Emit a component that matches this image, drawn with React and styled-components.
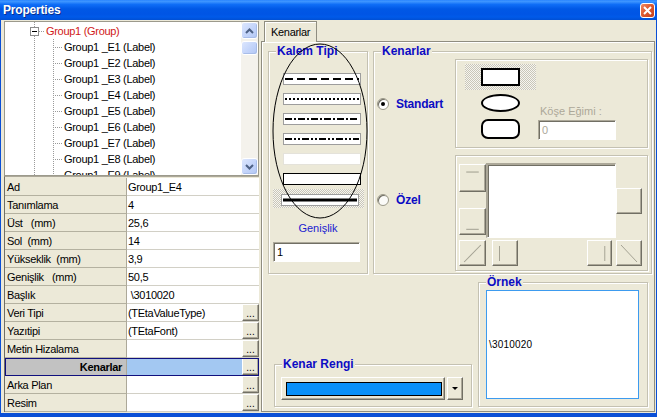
import React from "react";
import styled, { createGlobalStyle, css } from "styled-components";

const GlobalStyle = createGlobalStyle`
  html, body {
    margin: 0;
    padding: 0;
    background: #ece9d8;
  }
  body {
    font-family: "Liberation Sans", Arial, sans-serif;
    font-size: 11px;
    color: #000;
  }
  * {
    box-sizing: border-box;
  }
`;

// classic 3d borders
const raised = css`
  border: 1px solid;
  border-color: #fff #716f64 #716f64 #fff;
  box-shadow: inset -1px -1px 0 #aca899;
  background: #ece9d8;
`;
const sunken = css`
  border: 1px solid;
  border-color: #aca899 #fff #fff #aca899;
  box-shadow: inset 1px 1px 0 #716f64;
`;
const etched = css`
  border: 1px solid #c4c1b2;
  box-shadow: inset 1px 1px 0 #fff, 1px 1px 0 #fff;
`;
const dither = css`
  background: repeating-conic-gradient(#c9c6b8 0 25%, #f6f5f0 0 50%) 0 0 / 2px 2px;
`;

const Window = styled.div`
  width: 657px;
  height: 417px;
  display: flex;
  flex-direction: column;
  overflow: hidden;
`;

const TitleBar = styled.div`
  height: 20px;
  flex: none;
  display: flex;
  align-items: center;
  justify-content: space-between;
  padding: 0 2px 0 3px;
  background: linear-gradient(
    to bottom,
    #2b86ff 0%,
    #3d95ff 8%,
    #0f6ef7 22%,
    #0058e6 45%,
    #0055e5 70%,
    #005ae9 85%,
    #004fd4 100%
  );
`;

const Title = styled.span`
  color: #fff;
  font-weight: bold;
  font-size: 12px;
  letter-spacing: -0.2px;
  text-shadow: 1px 1px 0 #0a2f8f;
`;

const CloseButton = styled.div`
  width: 15px;
  height: 15px;
  border: 1px solid #fff;
  border-radius: 3px;
  background: linear-gradient(135deg, #f08a62 0%, #de5a31 45%, #c4401b 100%);
  display: flex;
  align-items: center;
  justify-content: center;
`;

const Frame = styled.div`
  flex: 1;
  display: flex;
  gap: 2px;
  background: #ece9d8;
  border: solid #0a4fd6;
  border-width: 0 1px 4px 1px;
  padding: 1px 1px 1px 3px;
  min-height: 0;
`;

const LeftPane = styled.div`
  width: 255px;
  flex: none;
  display: flex;
  flex-direction: column;
`;

/* ---------- tree ---------- */

const Tree = styled.div`
  height: 155px;
  flex: none;
  display: flex;
  border: 1px solid #9c9a8c;
  background: #fff;
`;

const TreeBody = styled.div`
  flex: 1;
  overflow: hidden;
  padding-top: 1px;
  background:
    repeating-linear-gradient(to bottom, #9a9a9a 0 1px, transparent 1px 2px) 29px 0 / 1px 100% no-repeat,
    repeating-linear-gradient(to bottom, #9a9a9a 0 1px, transparent 1px 2px) 48px 17px / 1px calc(100% - 17px) no-repeat,
    #fff;
`;

const TreeRow = styled.div`
  height: 16px;
  display: flex;
  align-items: center;
  padding-left: ${(p) => (p.$root ? 25 : 48)}px;
  white-space: pre;
  font-size: 11px;
  letter-spacing: -0.3px;
  color: ${(p) => (p.$root ? "#d01818" : "#000")};
`;

const Expander = styled.span`
  width: 9px;
  height: 9px;
  border: 1px solid #8c8c8c;
  background: #fff;
  display: flex;
  align-items: center;
  justify-content: center;
  &::after {
    content: "";
    width: 5px;
    height: 1px;
    background: #000;
  }
`;

const Connector = styled.span`
  width: ${(p) => p.$w}px;
  height: 1px;
  margin-right: ${(p) => p.$gap}px;
  background: repeating-linear-gradient(to right, #9a9a9a 0 1px, transparent 1px 2px);
`;

const ScrollBar = styled.div`
  width: 17px;
  flex: none;
  display: flex;
  flex-direction: column;
  background: #f4f2ec;
`;

const ScrollButton = styled.div`
  height: 17px;
  flex: none;
  border: 1px solid #fff;
  border-radius: 3px;
  background: linear-gradient(135deg, #dce6fd 0%, #c3d4fa 55%, #b3c7f4 100%);
  box-shadow: inset -1px -1px 0 #a8bde9;
  display: flex;
  align-items: center;
  justify-content: center;
`;

const Thumb = styled(ScrollButton)`
  height: 14px;
  margin-top: 2px;
`;

const Track = styled.div`
  flex: 1;
`;

/* ---------- property grid ---------- */

const PropGrid = styled.div`
  flex: 1;
  display: flex;
  flex-direction: column;
  border-top: 1px solid #aca899;
  border-left: 1px solid #716f64;
  padding-top: 1px;
`;

const PropRow = styled.div`
  height: 18px;
  flex: none;
  display: grid;
  grid-template-columns: 122px 1fr;
  ${(p) =>
    p.$selected &&
    css`
      outline: 1px solid #10107e;
      outline-offset: -1px;
    `}
`;

const PropName = styled.div`
  display: flex;
  align-items: center;
  padding: 0 4px 0 2px;
  white-space: pre;
  letter-spacing: -0.3px;
  background: ${(p) => (p.$selected ? "#c2c2c2" : "#ece9d8")};
  border-right: 1px solid #aca899;
  border-bottom: 1px solid #b4b1a0;
  justify-content: ${(p) => (p.$selected ? "flex-end" : "flex-start")};
  font-weight: ${(p) => (p.$selected ? "bold" : "normal")};
`;

const PropValue = styled.div`
  display: flex;
  align-items: center;
  justify-content: space-between;
  padding-left: 1px;
  white-space: pre;
  letter-spacing: -0.3px;
  background: ${(p) => (p.$selected ? "#a3c8f2" : "#fff")};
  border-bottom: 1px solid #d2d0c6;
`;

const DotsButton = styled.div`
  ${raised}
  width: 17px;
  height: 17px;
  align-self: flex-start;
  display: flex;
  align-items: flex-end;
  justify-content: center;
  font-size: 10px;
  line-height: 12px;
  letter-spacing: 0;
`;

/* ---------- right side ---------- */

const RightPane = styled.div`
  width: 394px;
  flex: none;
  display: flex;
  flex-direction: column;
`;

const TabStrip = styled.div`
  height: 20px;
  flex: none;
  display: flex;
  align-items: flex-end;
  padding-left: 3px;
`;

const Tab = styled.div`
  position: relative;
  z-index: 1;
  height: 21px;
  margin-bottom: -1px;
  padding: 2px 6px 0;
  background: #ece9d8;
  border: 1px solid #8f8d80;
  border-bottom: none;
  box-shadow: inset 1px 1px 0 #fff;
  font-size: 11px;
  letter-spacing: -0.3px;
  line-height: 16px;
`;

const TabPage = styled.div`
  flex: 1;
  display: flex;
  flex-direction: column;
  border: 1px solid #8f8d80;
  box-shadow: inset 1px 1px 0 #fff;
  padding-top: 9px;
`;

const TopRow = styled.div`
  display: flex;
  gap: 5px;
  padding-left: 6px;
`;

const BottomRow = styled.div`
  display: flex;
  align-items: flex-end;
  gap: 6px;
  margin-top: 8px;
  padding-left: 12px;
`;

const Group = styled.div`
  position: relative;
  flex: none;
  width: ${(p) => p.$w}px;
  height: ${(p) => p.$h}px;
  ${etched}
`;

const Legend = styled.span`
  position: absolute;
  left: 7px;
  top: -8px;
  padding: 0 1px;
  background: #ece9d8;
  color: #0c0cc4;
  font-weight: bold;
  font-size: 12px;
  line-height: 14px;
  white-space: nowrap;
`;

/* Kalem Tipi */

const KalemBody = styled.div`
  display: flex;
  flex-direction: column;
  padding: 21px 0 0 4px;
`;

const PenList = styled.div`
  display: flex;
  flex-direction: column;
  gap: 8px;
  margin-left: 10px;
`;

const PenBox = styled.div`
  width: 78px;
  height: 12px;
  background: #fff;
  border: 1px solid ${(p) => p.$border || "#9d9d9d"};
  display: flex;
`;

const PenHatch = styled.div`
  ${dither}
  width: 91px;
  height: 19px;
  margin-top: 4px;
  padding: 5px 0 0 8px;
`;

const BlueLabel = styled.div`
  color: #1a1ad0;
  font-size: 11px;
  line-height: 13px;
  text-align: ${(p) => p.$align || "left"};
  margin-top: ${(p) => p.$mt || 0}px;
  padding-right: ${(p) => p.$pr || 0}px;
`;

const TextInput = styled.div`
  ${sunken}
  width: ${(p) => p.$w}px;
  height: ${(p) => p.$h || 20}px;
  margin-top: ${(p) => p.$mt || 0}px;
  background: #fff;
  padding: 2px 0 0 3px;
  font-size: 11px;
  line-height: 14px;
  color: ${(p) => (p.$disabled ? "#aca899" : "#000")};
`;

const Annotation = styled.svg`
  position: absolute;
  left: 3px;
  top: -9px;
  pointer-events: none;
  overflow: visible;
`;

/* Kenarlar */

const KenarGrid = styled.div`
  display: grid;
  grid-template-columns: 81px 193px;
  grid-template-rows: 89px 116px;
  row-gap: 7px;
  padding-top: 7px;
`;

const RadioItem = styled.div`
  display: flex;
  align-items: center;
  gap: 7px;
  padding-left: 3px;
  align-self: ${(p) => (p.$top ? "start" : "center")};
  margin-top: ${(p) => (p.$top ? 38 : 0)}px;
  color: #0c0cc4;
  font-weight: bold;
  font-size: 12px;
  letter-spacing: -0.2px;
`;

const RadioDot = styled.span`
  width: 12px;
  height: 12px;
  border-radius: 50%;
  border: 1px solid #9a9888;
  background: ${(p) => (p.$faded ? "#fbfbf8" : "#fff")};
  box-shadow: inset 1px 1px 0 #6f6d62;
  display: flex;
  align-items: center;
  justify-content: center;
  &::after {
    content: "";
    width: 4px;
    height: 4px;
    border-radius: 50%;
    background: ${(p) => (p.$checked ? "#000" : "transparent")};
  }
`;

const Panel = styled.div`
  ${etched}
  display: flex;
`;

const ShapePanel = styled(Panel)`
  padding: 4px 0 0 9px;
`;

const ShapeList = styled.div`
  width: 71px;
  display: flex;
  flex-direction: column;
`;

const ShapeItem = styled.div`
  height: 26px;
  display: flex;
  align-items: center;
  justify-content: center;
  ${(p) => p.$selected && dither}
`;

const Shape = styled.div`
  width: 39px;
  height: ${(p) => (p.$kind === "round" ? 20 : 18)}px;
  border: 2px solid #000;
  background: #fff;
  border-radius: ${(p) =>
    p.$kind === "ellipse" ? "50%" : p.$kind === "round" ? "7px" : "0"};
`;

const CornerBox = styled.div`
  align-self: flex-end;
  margin: 0 0 7px 2px;
  display: flex;
  flex-direction: column;
`;

const GrayLabel = styled.div`
  color: #aca899;
  font-size: 11px;
  line-height: 13px;
  padding-left: 2px;
  margin-bottom: 2px;
`;

const EdgePanel = styled(Panel)`
  display: grid;
  grid-template-columns: 27px 6px 26px 69px 25px 4px 26px;
  grid-template-rows: 75px 26px;
  row-gap: 2px;
  padding: 7px 0 0 3px;
`;

const EdgeColumn = styled.div`
  grid-column: 1;
  grid-row: 1;
  display: flex;
  flex-direction: column;
  justify-content: space-between;
  padding: 1px 0 3px;
`;

const EdgeButton = styled.div`
  ${raised}
  width: ${(p) => p.$w || 26}px;
  height: ${(p) => p.$h || 26}px;
  grid-column: ${(p) => p.$col || "auto"};
  grid-row: ${(p) => p.$row || "auto"};
  align-self: center;
  display: flex;
`;

const EdgePreview = styled.div`
  ${sunken}
  grid-column: 2 / span 5;
  grid-row: 1;
  background: #fff;
  border-width: 2px 1px 1px 2px;
`;

/* Kenar Rengi / Ornek */

const Combo = styled.div`
  display: flex;
  gap: 2px;
  margin: 12px 0 0 6px;
  width: 182px;
  height: 23px;
`;

const ColorField = styled.div`
  ${raised}
  flex: 1;
  display: flex;
  align-items: center;
  padding: 0 2px 0 4px;
`;

const Swatch = styled.div`
  flex: 1;
  height: 14px;
  background: ${(p) => p.$color};
  border: 1px solid #000;
`;

const DropButton = styled.div`
  ${raised}
  width: 16px;
  display: flex;
  align-items: center;
  justify-content: center;
  &::after {
    content: "";
    border-left: 3px solid transparent;
    border-right: 3px solid transparent;
    border-top: 3px solid #000;
  }
`;

const Preview = styled.div`
  width: 153px;
  height: 109px;
  margin: 7px 0 0 7px;
  background: #fff;
  border: 1px solid #3d9bef;
  display: flex;
  align-items: center;
  padding: 0 0 0 2px;
  font-size: 10px;
  letter-spacing: 0.2px;
`;

/* ---------- small drawings ---------- */

const Chevron = ({ up }) => (
  <svg width="9" height="6" viewBox="0 0 9 6">
    <polyline
      points={up ? "1,5 4.5,1.5 8,5" : "1,1 4.5,4.5 8,1"}
      fill="none"
      stroke="#4d6185"
      strokeWidth="2"
    />
  </svg>
);

const PenLine = ({ dash, width = 2 }) => (
  <svg width="76" height="10" viewBox="0 0 76 10">
    <line
      x1="1"
      y1="5"
      x2="75"
      y2="5"
      stroke="#000"
      strokeWidth={width}
      strokeDasharray={dash}
    />
  </svg>
);

const EdgeMark = ({ d }) => (
  <svg width="100%" height="100%" viewBox="0 0 24 24" preserveAspectRatio="none">
    <path d={d} stroke="#a4a293" strokeWidth="1" fill="none" />
  </svg>
);

const treeItems = ["E1", "E2", "E3", "E4", "E5", "E6", "E7", "E8", "E9"];

const props = [
  ["Ad", "Group1_E4"],
  ["Tanımlama", "4"],
  ["Üst   (mm)", "25,6"],
  ["Sol  (mm)", "14"],
  ["Yükseklik  (mm)", "3,9"],
  ["Genişlik   (mm)", "50,5"],
  ["Başlık", " \\3010020"],
  ["Veri Tipi", "(TEtaValueType)", true],
  ["Yazıtipi", "(TEtaFont)", true],
  ["Metin Hizalama", "", true],
  ["Kenarlar", "", true, true],
  ["Arka Plan", "", true],
  ["Resim", "", true],
];

export default function App() {
  return (
    <>
      <GlobalStyle />
      <Window>
        <TitleBar>
          <Title>Properties</Title>
          <CloseButton>
            <svg width="9" height="9" viewBox="0 0 9 9">
              <path d="M1 1 L8 8 M8 1 L1 8" stroke="#fff" strokeWidth="2" />
            </svg>
          </CloseButton>
        </TitleBar>
        <Frame>
          <LeftPane>
            <Tree>
              <TreeBody>
                <TreeRow $root>
                  <Expander />
                  <Connector $w={6} $gap={1} />
                  Group1 (Group)
                </TreeRow>
                {treeItems.map((id) => (
                  <TreeRow key={id}>
                    <Connector $w={9} $gap={2} />
                    {`Group1 _${id} (Label)`}
                  </TreeRow>
                ))}
              </TreeBody>
              <ScrollBar>
                <ScrollButton>
                  <Chevron up />
                </ScrollButton>
                <Thumb />
                <Track />
                <ScrollButton>
                  <Chevron />
                </ScrollButton>
              </ScrollBar>
            </Tree>
            <PropGrid>
              {props.map(([name, value, hasButton, selected]) => (
                <PropRow key={name} $selected={selected}>
                  <PropName $selected={selected}>{name}</PropName>
                  <PropValue $selected={selected}>
                    <span>{value}</span>
                    {hasButton && <DotsButton>...</DotsButton>}
                  </PropValue>
                </PropRow>
              ))}
            </PropGrid>
          </LeftPane>

          <RightPane>
            <TabStrip>
              <Tab>Kenarlar</Tab>
            </TabStrip>
            <TabPage>
              <TopRow>
                <Group $w={100} $h={223}>
                  <Legend>Kalem Tipi</Legend>
                  <KalemBody>
                    <PenList>
                      <PenBox>
                        <PenLine dash="8 4" />
                      </PenBox>
                      <PenBox>
                        <PenLine dash="2 2" />
                      </PenBox>
                      <PenBox>
                        <PenLine dash="7 2 2 2" />
                      </PenBox>
                      <PenBox>
                        <PenLine dash="7 2 2 2 2 2" />
                      </PenBox>
                      <PenBox $border="#e4e2da" />
                      <PenBox $border="#000" />
                    </PenList>
                    <PenHatch>
                      <PenBox>
                        <PenLine width={3} />
                      </PenBox>
                    </PenHatch>
                    <BlueLabel $align="center" $mt={14} $pr={4}>
                      Genişlik
                    </BlueLabel>
                    <TextInput $w={87} $mt={7}>
                      1
                    </TextInput>
                  </KalemBody>
                  <Annotation width="96" height="176" viewBox="0 0 96 176">
                    <ellipse
                      cx="48"
                      cy="88"
                      rx="47"
                      ry="87"
                      fill="none"
                      stroke="#000"
                      strokeWidth="1"
                    />
                  </Annotation>
                </Group>

                <Group $w={279} $h={223}>
                  <Legend>Kenarlar</Legend>
                  <KenarGrid>
                    <RadioItem>
                      <RadioDot $checked />
                      Standart
                    </RadioItem>
                    <ShapePanel>
                      <ShapeList>
                        <ShapeItem $selected>
                          <Shape $kind="rect" />
                        </ShapeItem>
                        <ShapeItem>
                          <Shape $kind="ellipse" />
                        </ShapeItem>
                        <ShapeItem>
                          <Shape $kind="round" />
                        </ShapeItem>
                      </ShapeList>
                      <CornerBox>
                        <GrayLabel>Köşe Eğimi :</GrayLabel>
                        <TextInput $w={78} $disabled>
                          0
                        </TextInput>
                      </CornerBox>
                    </ShapePanel>

                    <RadioItem $top>
                      <RadioDot $faded />
                      Özel
                    </RadioItem>
                    <EdgePanel>
                      <EdgeColumn>
                        <EdgeButton $w={27} $h={28}>
                          <EdgeMark d="M6 6.5 H18" />
                        </EdgeButton>
                        <EdgeButton $w={27} $h={27}>
                          <EdgeMark d="M6 19.5 H18" />
                        </EdgeButton>
                      </EdgeColumn>
                      <EdgePreview />
                      <EdgeButton $col={7} $row={1} $w={26} $h={26} />
                      <EdgeButton $col={1} $row={2} $w={27}>
                        <EdgeMark d="M4 21 L20 4" />
                      </EdgeButton>
                      <EdgeButton $col={3} $row={2}>
                        <EdgeMark d="M6.5 5 V20" />
                      </EdgeButton>
                      <EdgeButton $col={5} $row={2} $w={25}>
                        <EdgeMark d="M17.5 5 V20" />
                      </EdgeButton>
                      <EdgeButton $col={7} $row={2}>
                        <EdgeMark d="M4 4 L20 21" />
                      </EdgeButton>
                    </EdgePanel>
                  </KenarGrid>
                </Group>
              </TopRow>

              <BottomRow>
                <Group $w={198} $h={43}>
                  <Legend>Kenar Rengi</Legend>
                  <Combo>
                    <ColorField>
                      <Swatch $color="#0a90f8" />
                    </ColorField>
                    <DropButton />
                  </Combo>
                </Group>
                <Group $w={170} $h={125}>
                  <Legend>Örnek</Legend>
                  <Preview>\3010020</Preview>
                </Group>
              </BottomRow>
            </TabPage>
          </RightPane>
        </Frame>
      </Window>
    </>
  );
}
